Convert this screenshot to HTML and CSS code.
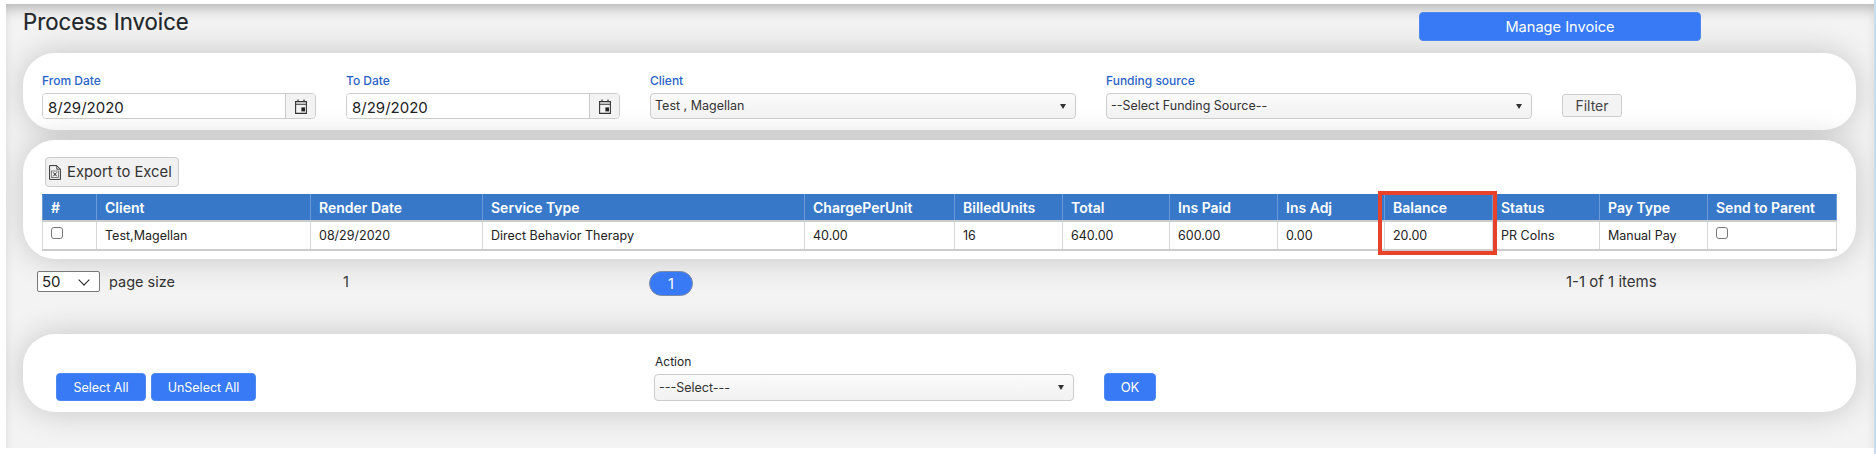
FILE: index.html
```html
<!DOCTYPE html>
<html lang="en">
<head>
<meta charset="utf-8">
<title>Process Invoice</title>
<link rel="stylesheet" href="styles.css">
</head>
<body>
<main class="page">
  <header class="top">
    <h1 class="title">Process Invoice</h1>
    <button class="btn btn-manage" type="button">Manage Invoice</button>
  </header>

  <section class="card card-filter">
    <div class="field f-date">
      <label class="lbl">From Date</label>
      <div class="date">
        <input class="date-input" type="text" value="8/29/2020">
        <span class="addon">
          <svg width="12" height="15" viewBox="0 0 12 15"><path d="M.6 2.6h10.8v11.8H.6zM.6 5.2h10.8" fill="none" stroke="#333" stroke-width="1.1"/><path d="M3 .6v2.4M9 .6v2.4" stroke="#333" stroke-width="1.2"/><rect x="6.4" y="8.4" width="3.6" height="4" fill="#222"/></svg>
        </span>
      </div>
    </div>
    <div class="field f-date">
      <label class="lbl">To Date</label>
      <div class="date">
        <input class="date-input" type="text" value="8/29/2020">
        <span class="addon">
          <svg width="12" height="15" viewBox="0 0 12 15"><path d="M.6 2.6h10.8v11.8H.6zM.6 5.2h10.8" fill="none" stroke="#333" stroke-width="1.1"/><path d="M3 .6v2.4M9 .6v2.4" stroke="#333" stroke-width="1.2"/><rect x="6.4" y="8.4" width="3.6" height="4" fill="#222"/></svg>
        </span>
      </div>
    </div>
    <div class="field f-client">
      <label class="lbl">Client</label>
      <div class="sel-wrap"><select class="sel"><option>Test , Magellan</option></select></div>
    </div>
    <div class="field f-fund">
      <label class="lbl">Funding source</label>
      <div class="sel-wrap"><select class="sel"><option>--Select Funding Source--</option></select></div>
    </div>
    <button class="btn-filter" type="button">Filter</button>
  </section>

  <section class="card card-table">
    <button class="btn-export" type="button">
      <svg width="12" height="15" viewBox="0 0 12 15"><path d="M.6.6h7.2l3.6 3.6v10.2H.6z" fill="none" stroke="#333" stroke-width="1"/><path d="M7.8.6v3.6h3.6" fill="none" stroke="#333" stroke-width=".9"/><rect x="2.4" y="6" width="7.2" height="6.6" fill="none" stroke="#555" stroke-width=".7"/><path d="M4.2 7.4l3.6 3.9M7.8 7.4l-3.6 3.9" stroke="#222" stroke-width="1"/></svg>
      Export to Excel
    </button>
    <div class="table-wrap">
      <table class="grid">
        <colgroup>
          <col class="c54"><col class="c214"><col class="c172"><col class="c322"><col class="c150"><col class="c108"><col class="c107"><col class="c108"><col class="c107"><col class="c108"><col class="c107"><col class="c108"><col class="c129">
        </colgroup>
        <thead>
          <tr><th>#</th><th>Client</th><th>Render Date</th><th>Service Type</th><th>ChargePerUnit</th><th>BilledUnits</th><th>Total</th><th>Ins Paid</th><th>Ins Adj</th><th>Balance</th><th>Status</th><th>Pay Type</th><th>Send to Parent</th></tr>
        </thead>
        <tbody>
          <tr><td class="chk-cell"><input class="chk" type="checkbox"></td><td>Test,Magellan</td><td>08/29/2020</td><td>Direct Behavior Therapy</td><td>40.00</td><td>16</td><td>640.00</td><td>600.00</td><td>0.00</td><td>20.00</td><td>PR CoIns</td><td>Manual Pay</td><td class="chk-cell"><input class="chk" type="checkbox"></td></tr>
        </tbody>
      </table>
      <span class="highlight"></span>
    </div>
  </section>

  <div class="pager">
    <div class="size-wrap"><select class="size"><option>50</option></select></div>
    <span class="size-lbl">page size</span>
    <span class="cur">1</span>
    <span class="pill">1</span>
    <span class="items">1-1 of 1 items</span>
  </div>

  <section class="card card-action">
    <button class="btn btn-select" type="button">Select All</button>
    <button class="btn btn-unselect" type="button">UnSelect All</button>
    <div class="action">
      <label class="lbl-action">Action</label>
      <div class="sel-wrap"><select class="sel sel-action"><option>---Select---</option></select></div>
    </div>
    <button class="btn btn-ok" type="button">OK</button>
  </section>
</main>
</body>
</html>
```
FILE: styles.css
```css
* { box-sizing: border-box; }
html, body { margin: 0; padding: 0; height: 100%; background: #fff; overflow: hidden; }
body { font-family: Inter, "Liberation Sans", sans-serif; color: #222; border-right: 2px solid #c9dcea; }
.page {
  margin: 4px 0 0 6px;
  width: 1868px;
  height: 444px;
  padding: 0 18px 0 17px;
  background: #f3f3f3;
  box-shadow: inset 0 10px 14px -6px rgba(0,0,0,.28);
  overflow: hidden;
}
.top { display: flex; justify-content: space-between; align-items: flex-start; height: 49px; padding-right: 155px; }
.title { margin: 3px 0 0; font-size: 22.2px; line-height: 30px; font-weight: 400; color: #212529; -webkit-text-stroke: .2px #212529; }
.btn {
  border: 1px solid #4d88ee;
  border-radius: 4px;
  background: #387af6;
  color: #fff;
  font-family: inherit;
  padding: 0;
}
.btn-manage { width: 282px; height: 29px; margin-top: 8px; font-size: 14.6px; }
.card { background: #fff; border-radius: 32px; box-shadow: 0 0 32px rgba(0,0,0,.19); }
.card-filter { height: 77px; padding: 21px 0 0 19px; display: flex; gap: 30px; align-items: flex-start; }
.field { display: flex; flex-direction: column; }
.f-date { width: 274px; }
.f-client { width: 426px; }
.f-fund { width: 426px; }
.lbl { font-size: 12px; line-height: 13px; height: 19px; font-weight: 500; color: #2a62c9; }
.date {
  display: flex; height: 26px; border: 1px solid #ccc; border-radius: 4px; overflow: hidden; background: #fff;
}
.date-input { flex: 1; min-width: 0; border: 0; outline: 0; padding: 2px 0 0 5px; font: 15px Inter, sans-serif; color: #222; background: #fff; }
.addon { width: 30px; display: flex; align-items: center; justify-content: center; background: #f3f3f3; border-left: 1px solid #ccc; }
.sel-wrap { position: relative; height: 26px; }
.sel-wrap::after {
  content: ""; position: absolute; right: 10px; top: 11px;
  border-left: 3.5px solid transparent; border-right: 3.5px solid transparent; border-top: 5px solid #333;
}
.sel {
  appearance: none; width: 100%; height: 100%; margin: 0; padding: 0 0 1px 4px;
  border: 1px solid #ccc; border-radius: 4px;
  background: linear-gradient(#fbfbfb, #f1f1f1);
  font: 12.5px Inter, sans-serif; color: #333;
}
.btn-filter {
  width: 60px; height: 23px; margin-top: 20px; padding: 0;
  border: 1px solid #ccc; border-radius: 3px; background: #f3f3f3;
  font: 14px Inter, sans-serif; color: #444;
}
.card-table { height: 119px; margin-top: 10px; padding: 17px 0 0 19px; }
.btn-export {
  display: flex; align-items: center; gap: 6px;
  width: 134px; height: 30px; padding: 0 0 0 3px; margin-left: 3px;
  border: 1px solid #ccc; border-radius: 4px; background: #f1f1f1;
  font: 14.8px Inter, sans-serif; color: #333;
}
.table-wrap { position: relative; margin-top: 7px; width: 1794px; }
.grid { border-collapse: collapse; table-layout: fixed; width: 1794px; }
.c54 { width: 54px; } .c214 { width: 214px; } .c172 { width: 172px; } .c322 { width: 322px; }
.c150 { width: 150px; } .c108 { width: 108px; } .c107 { width: 107px; } .c129 { width: 129px; }
.grid th {
  height: 26px; padding: 0 0 0 8px; text-align: left;
  background: #3778c8; color: #fff; font-size: 14px; font-weight: 600;
  border: 1px solid #6b9ad6; border-top-color: #3778c8; border-bottom: 2px solid #ccc;
}
.grid td {
  height: 29px; padding: 0 0 0 8px; font-size: 12.5px; color: #222;
  border: 1px solid #d8d8d8; border-top: 0; border-bottom: 2px solid #ccc;
}
.chk-cell { vertical-align: top; }
.chk {
  appearance: none; display: block; width: 12px; height: 12px; margin: 5px 0 0 0;
  border: 1px solid #777; border-radius: 3px; background: #fff;
}
.highlight {
  position: absolute; left: 1336px; top: -3px; width: 119px; height: 64px;
  border: 4px solid #e8432a;
}
.pager { display: flex; align-items: flex-start; margin-top: 12px; padding-left: 14px; height: 25px; font-size: 14.5px; color: #333; }
.size-wrap { position: relative; width: 63px; height: 21px; }
.size-wrap::after {
  content: ""; position: absolute; right: 12px; top: 5px; width: 7px; height: 7px;
  border-right: 1px solid #222; border-bottom: 1px solid #222; transform: rotate(45deg);
}
.size {
  appearance: none; width: 100%; height: 100%; margin: 0; padding: 0 0 0 4px;
  border: 1px solid #777; border-radius: 2px; background: #fff;
  font: 15px Inter, sans-serif; color: #222;
}
.size-lbl { width: 234px; margin-left: 9px; line-height: 21px; }
.cur { width: 306px; line-height: 21px; }
.pill { width: 44px; height: 25px; border-radius: 13px; border: 1px solid #7c8aa5; background: #387af6; color: #fff; text-align: center; line-height: 24px; }
.items { margin-left: 873px; line-height: 21px; font-size: 15px; }
.card-action { height: 78px; margin-top: 38px; padding: 0 0 11px 33px; display: flex; align-items: flex-end; }
.btn-select, .btn-unselect, .btn-ok { height: 28px; font-size: 12.5px; }
.btn-select { width: 90px; }
.btn-unselect { width: 105px; margin-left: 5px; }
.action { width: 420px; margin-left: 398px; }
.lbl-action { display: block; height: 20px; font-size: 12px; line-height: 16px; color: #222; padding-left: 1px; }
.action .sel-wrap { height: 27px; }
.btn-ok { width: 52px; margin-left: 30px; font-size: 13px; }
```
